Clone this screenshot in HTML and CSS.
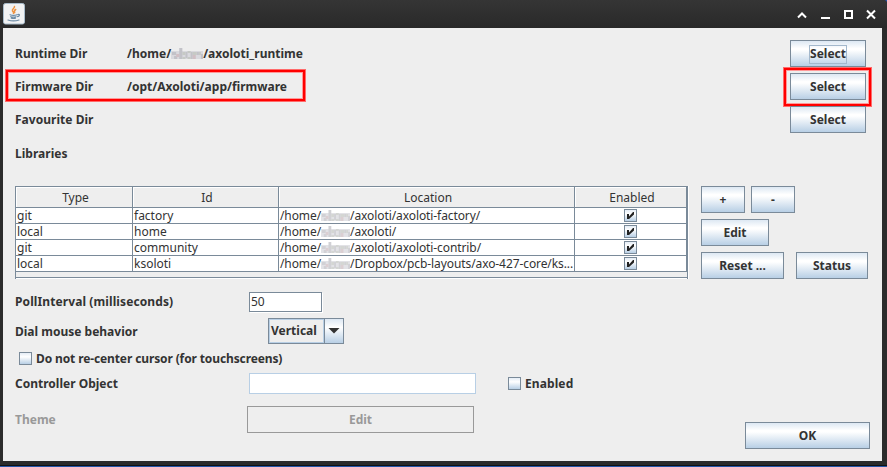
FILE: index.html
```html
<!DOCTYPE html>
<html lang="en">
<head>
<meta charset="utf-8">
<title>Preferences</title>
<link rel="stylesheet" href="styles.css">
</head>
<body>
<svg class="defs" width="0" height="0">
  <symbol id="mosaic" viewBox="0 0 31 13" preserveAspectRatio="none">
    <path fill="#d9d9de" d="M0 4h31v8H0z"/>
    <path fill="#c2c2c8" d="M1 5h4v3H1zM3 9h3v3H3zM8 1h3v11H8zM14 5h2v6h-2zM19 5h2v7h-2zM25 5h2v3h-2zM29 7h2v5h-2z"/>
    <path fill="#c6c9c5" d="M11 5h3v3h-3zM11 10h3v2h-3zM16 4h3v2h-3zM16 10h3v2h-3zM21 5h4v3h-4zM27 5h2v3h-2z"/>
    <path fill="#d0bfc4" d="M5 7h3v3H5zM21 8h3v4h-3z"/>
  </symbol>
  <symbol id="tick" viewBox="0 0 13 13"><path d="M3 5h2v2.500L9 3h1v2.500L5 10H3z"/></symbol>
</svg>
<div class="window">
<header class="titlebar">
  <svg class="java" width="22" height="22" viewBox="0 0 22 22"><rect x=".5" y=".5" width="21" height="20.500" rx="2" fill="#f1f2f3" stroke="#a9bccb"/><g fill="none" stroke-linecap="round"><path d="M11.500 3.500c.5 1.800-3 2.500-2 4.500 .6 1.100 1.500 1.200.9 2.300M12.700 6.500c-1.700 1-1.700 1.800-1 3.200" stroke="#ee9340" stroke-width="1.500"/><path d="M7 11.800c2 .7 5 .7 7 0M7.700 13.700c1.800.6 3.800.6 5.300 0M8.300 15.200c1.500.4 2.800.4 4.200 0M15 11.500c2.300-.5 1.500 1.800-.5 2.200M5 17c3 1 8 1 11 0" stroke="#6d8ca6" stroke-width="1.200"/></g></svg>
  <div class="controls">
    <svg width="80" height="12" viewBox="0 0 80 12"><g fill="none" stroke="#fff" stroke-width="2"><path d="M1 8.500 5 4.500 9 8.500"/><path d="M24 9h9"/><path d="M48 2h7v7h-7z"/><path d="M70 1.500 78 9.500M78 1.500 70 9.500"/></g></svg>
  </div>
</header>
<main class="pane">
  <section class="dirs">
    <div class="dir"><span class="key">Runtime Dir</span><span class="val">/home/<svg class="mask strong"><use href="#mosaic"/></svg>/axoloti_runtime</span><button class="btn"><span class="focus">Select</span></button></div>
    <div class="dir"><span class="key">Firmware Dir</span><span class="val">/opt/Axoloti/app/firmware</span><button class="btn">Select</button><i class="mark mark-row"></i><i class="mark mark-btn"></i></div>
    <div class="dir"><span class="key">Favourite Dir</span><span class="val"></span><button class="btn">Select</button></div>
    <div class="dir last"><span class="key">Libraries</span></div>
  </section>
  <section class="libs">
    <div class="scroller">
      <div class="tr th"><span>Type</span><span>Id</span><span>Location</span><span>Enabled</span></div>
      <div class="tr"><span>git</span><span>factory</span><span>/home/<svg class="mask"><use href="#mosaic"/></svg>/axoloti/axoloti-factory/</span><span><i class="check"><svg width="13" height="13"><use href="#tick"/></svg></i></span></div>
      <div class="tr"><span>local</span><span>home</span><span>/home/<svg class="mask"><use href="#mosaic"/></svg>/axoloti/</span><span><i class="check"><svg width="13" height="13"><use href="#tick"/></svg></i></span></div>
      <div class="tr"><span>git</span><span>community</span><span>/home/<svg class="mask"><use href="#mosaic"/></svg>/axoloti/axoloti-contrib/</span><span><i class="check"><svg width="13" height="13"><use href="#tick"/></svg></i></span></div>
      <div class="tr"><span>local</span><span>ksoloti</span><span>/home/<svg class="mask"><use href="#mosaic"/></svg>/Dropbox/pcb-layouts/axo-427-core/ks...</span><span><i class="check"><svg width="13" height="13"><use href="#tick"/></svg></i></span></div>
    </div>
    <div class="actions">
      <div class="arow"><button class="btn w44">+</button><button class="btn w44">-</button></div>
      <div class="arow"><button class="btn w68">Edit</button></div>
      <div class="arow wide"><button class="btn w83">Reset ...</button><button class="btn w72">Status</button></div>
    </div>
  </section>
  <section class="bottom">
    <div class="form">
      <div class="field poll"><span class="label">PollInterval (milliseconds)</span><span class="input">50</span></div>
      <div class="field dial"><span class="label">Dial mouse behavior</span><span class="combo"><span class="choice">Vertical</span><span class="drop"><svg width="12" height="6" viewBox="0 0 12 6"><path d="M0.500 0h11L6 5.500z"/></svg></span></span></div>
      <div class="field center"><i class="check"></i><span>Do not re-center cursor (for touchscreens)</span></div>
      <div class="field controller"><span class="label">Controller Object</span><span class="input long"></span><i class="check"></i><span class="enabled">Enabled</span></div>
      <div class="field theme"><span class="label">Theme</span><button class="btn disabled">Edit</button></div>
    </div>
    <button class="btn ok">OK</button>
  </section>
</main>
</div>
</body>
</html>
```
FILE: styles.css
```css
* { box-sizing: border-box; }
body { margin: 0; background: #2455a8; }
.defs { position: absolute; }
.window {
  width: 887px;
  height: 466px;
  padding: 0 5px 5px 3px;
  background: #2b2b2b;
  border-bottom: 1px solid #101214;
  font: bold 12px/16px "Noto Sans", sans-serif;
  color: #333;
  white-space: nowrap;
  overflow: hidden;
  border-top-right-radius: 4px;
}
.titlebar {
  height: 28px;
  margin: 0 -5px 0 -3px;
  padding: 3px 10px 0 3px;
  display: flex;
  justify-content: space-between;
  background: linear-gradient(#353535, #292929);
}
.controls { padding-top: 6px; }
svg { display: block; }
.pane { height: 433px; padding: 12px; background: #eee; }
.dirs { display: flex; flex-direction: column; gap: 6px; height: 146px; }
.dir { position: relative; display: flex; align-items: center; height: 27px; }
.dir.last { height: 29px; }
.key { width: 112px; letter-spacing: .03px; }
.val { flex: 1; }
.dir .btn { width: 76px; margin-right: 4px; }
.btn {
  height: 27px;
  padding: 1px 0 0;
  display: flex;
  align-items: center;
  justify-content: center;
  border: 1px solid #7a8a99;
  border-radius: 0;
  background: linear-gradient(#dde8f3 0%, #fff 30%, #fff 36%, #b8cfe5 100%);
  font: inherit;
  color: #333;
}
.focus { outline: 1px solid #a3b8cc; height: 17px; line-height: 16px; }
.mark { position: absolute; border: 2px solid #f00; box-shadow: 0 0 0 1px #ff6b6b, inset 0 0 0 1px #f99; }
.mark-row { left: -9px; top: -3px; width: 299px; height: 31px; }
.mark-btn { left: 769px; top: -5px; width: 87px; height: 38px; }
.mask { display: inline-block; width: 29px; height: 13px; vertical-align: -2px; opacity: .75; }
.mask.strong { width: 32px; opacity: 1; }
.libs { display: flex; gap: 13px; height: 93px; }
.scroller {
  width: 673px;
  height: 93px;
  border: 1px solid #7a8a99;
  border-bottom: 0;
  box-shadow: inset 0 -1px #fff, inset 0 -2px #7a8a99, 1px 0 #fff;
  font-weight: normal;
}
.tr { display: grid; grid-template-columns: 117px 146px 296px 112px; height: 16px; background: #fff; }
.tr > span { padding-left: 1px; border-right: 1px solid #7a8a99; border-bottom: 1px solid #7a8a99; line-height: 16px; height: 16px; }
.tr > span:nth-child(3) { letter-spacing: -.09px; }
.tr > span:last-child { display: flex; justify-content: center; padding: 1px 0 0; }
.tr.th { height: 21px; background: #eee; }
.tr.th > span, .tr.th > span:last-child { display: block; height: 21px; padding: 0 0 0 3px; text-align: center; line-height: 21px; letter-spacing: 0; box-shadow: inset 1px 1px #fff; }
.check { width: 13px; height: 13px; flex: none; border: 1px solid #7a8a99; background: linear-gradient(#e5edf6, #fff 35%, #b8cfe5); }
.check svg { margin: -1px; fill: #222; }
.actions { display: flex; flex-direction: column; gap: 6px; }
.arow { display: flex; gap: 6px; }
.wide { gap: 12px; }
.w44 { width: 44px; }
.w68 { width: 68px; }
.w83 { width: 83px; }
.w72 { width: 72px; }
.bottom { display: flex; justify-content: space-between; align-items: flex-end; height: 170px; }
.form { align-self: stretch; padding-top: 12px; }
.field { display: flex; align-items: center; }
.label { width: 234px; }
.poll { height: 21px; }
.poll .label { letter-spacing: .1px; }
.input { width: 73px; height: 20px; padding-left: 1px; line-height: 18px; background: #fff; border: 1px solid #7a8a99; box-shadow: 1px 1px #fff; font-weight: normal; }
.long { width: 227px; height: 21px; border-color: #b8cfe5; box-shadow: none; margin-right: 32px; }
.dial { height: 26px; margin-top: 6px; }
.dial .label { width: 253px; padding-top: 1px; }
.combo { display: flex; width: 76px; height: 26px; border: 1px solid #7a8a99; }
.choice { width: 55px; padding-left: 1px; line-height: 22px; border: 1px solid #b8cfe5; }
.drop { flex: 1; display: flex; align-items: center; justify-content: center; border-left: 1px solid #7a8a99; background: linear-gradient(#dde8f3, #fff 35%, #b8cfe5); fill: #333; }
.center { height: 13px; margin-top: 8px; padding-left: 4px; letter-spacing: -.12px; }
.field .check + span { margin-left: 4px; }
.enabled { letter-spacing: .1px; }
.controller { height: 21px; margin-top: 8px; }
.theme { height: 27px; margin-top: 12px; color: #999; }
.theme .label { width: 232px; }
.disabled { width: 227px; background: #eee; border-color: #999; color: #999; }
.ok { width: 125px; }
```
